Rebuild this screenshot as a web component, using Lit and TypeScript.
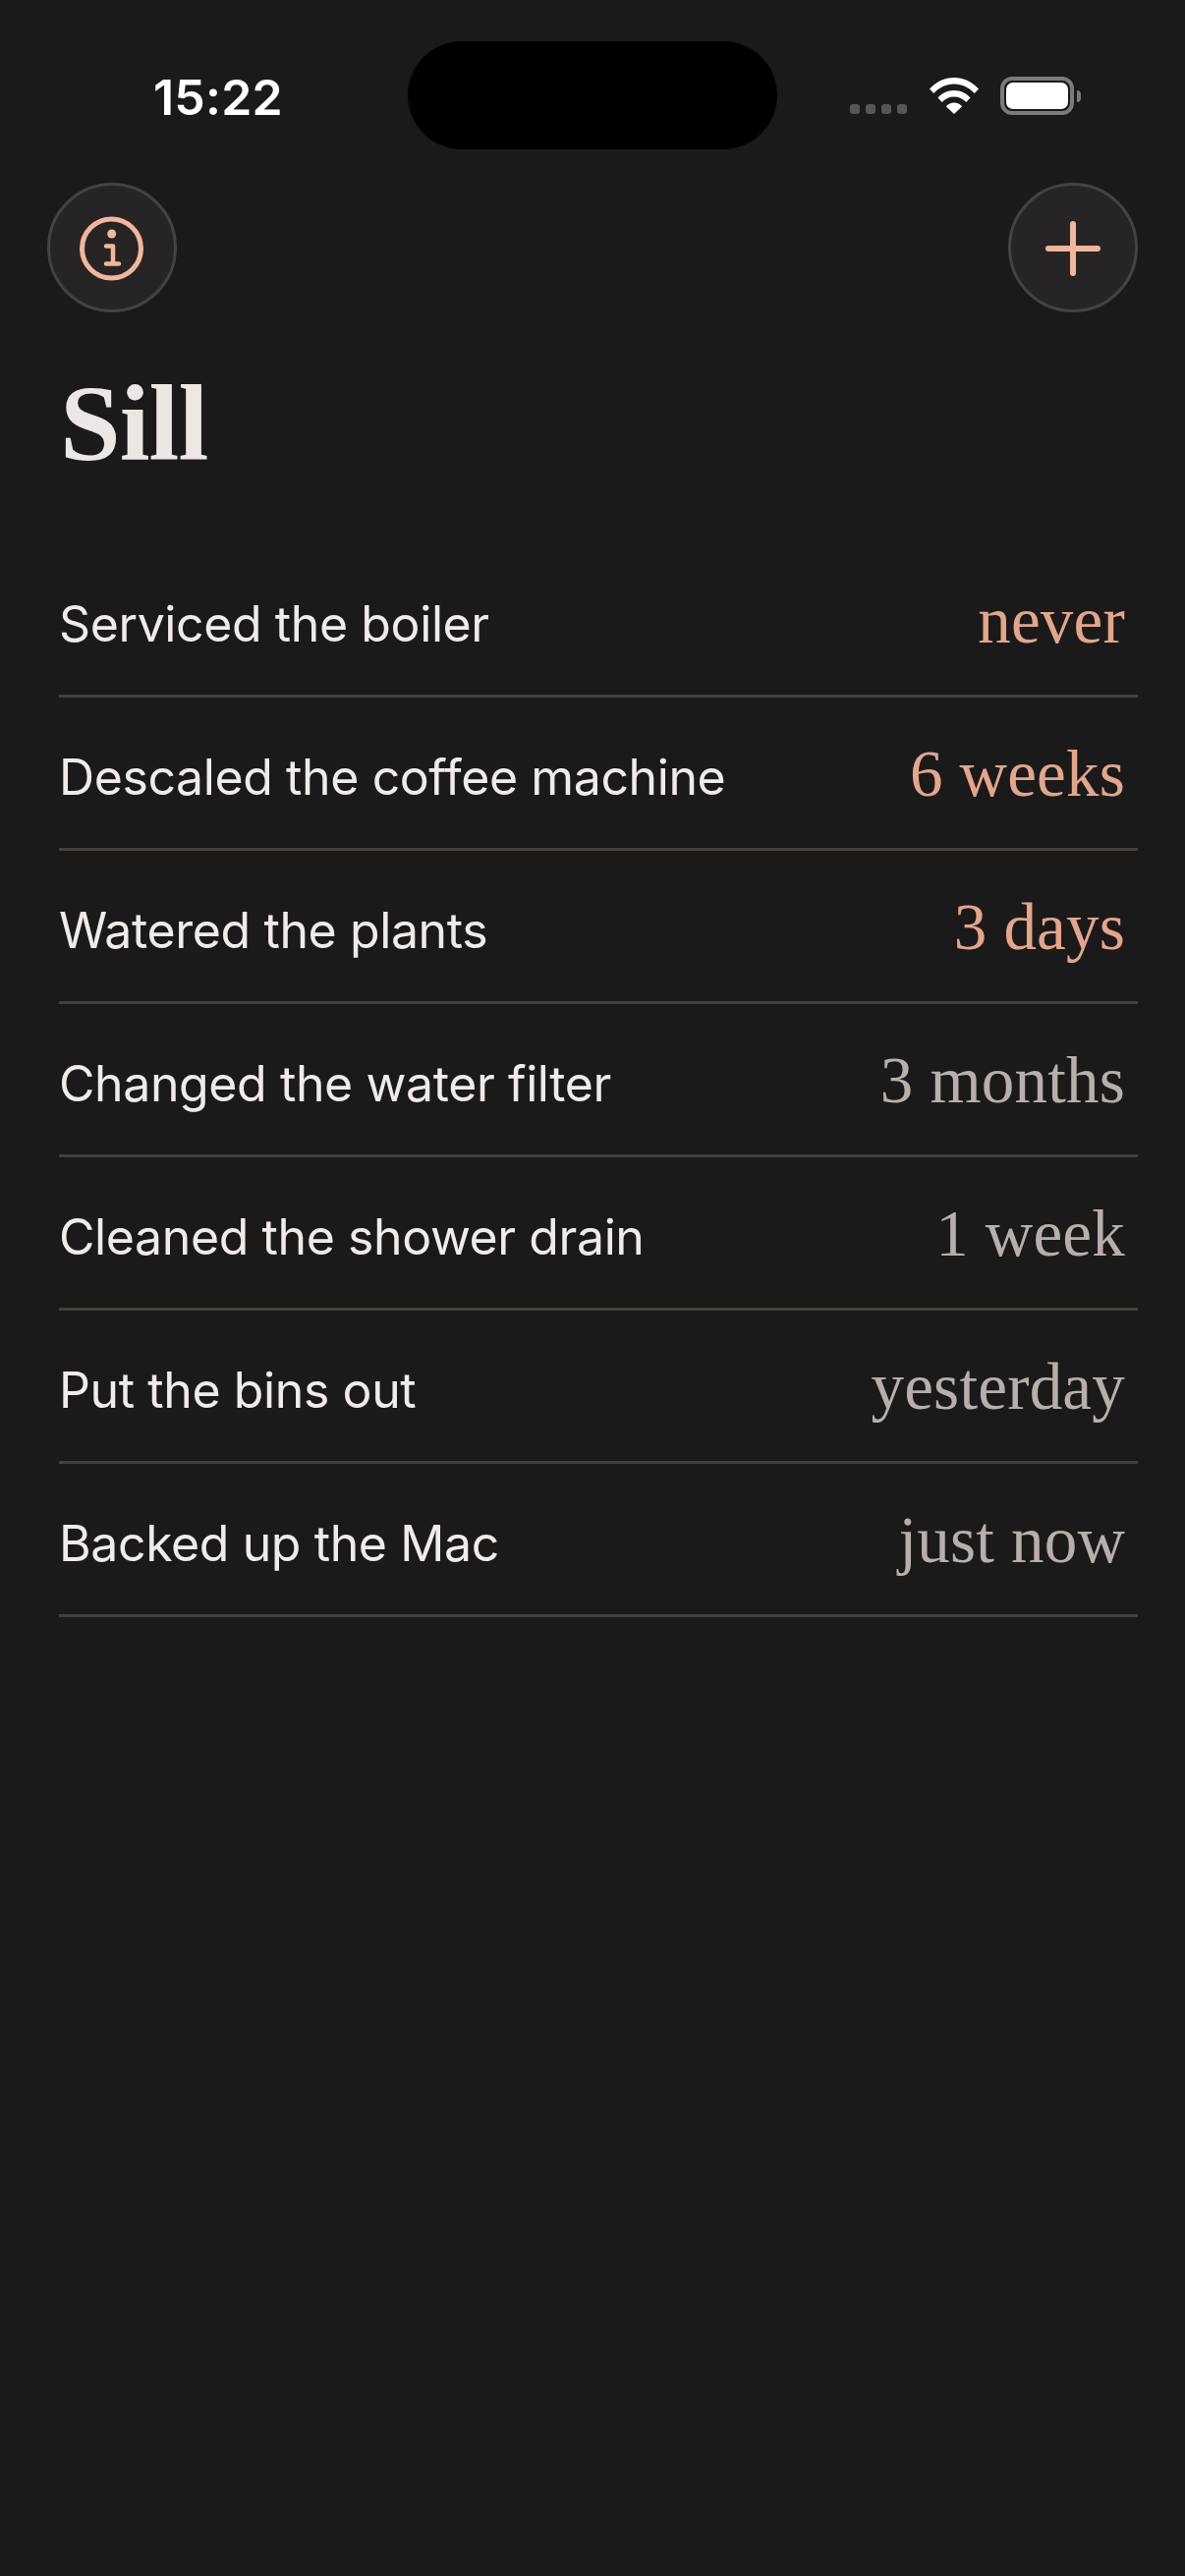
import { LitElement, html, css } from 'lit'
import { customElement } from 'lit/decorators.js'

interface Chore {
  label: string
  ago: string
  overdue: boolean
}

const CHORES: Chore[] = [
  { label: 'Serviced the boiler', ago: 'never', overdue: true },
  { label: 'Descaled the coffee machine', ago: '6 weeks', overdue: true },
  { label: 'Watered the plants', ago: '3 days', overdue: true },
  { label: 'Changed the water filter', ago: '3 months', overdue: false },
  { label: 'Cleaned the shower drain', ago: '1 week', overdue: false },
  { label: 'Put the bins out', ago: 'yesterday', overdue: false },
  { label: 'Backed up the Mac', ago: 'just now', overdue: false }
]

@customElement('app-root')
export class AppRoot extends LitElement {
  render() {
    return html`
      <div class="status">
        <span class="time">15:22</span>
        <div class="island"></div>
        <div class="indicators">
          <div class="dots"><i></i><i></i><i></i><i></i></div>
          <svg class="wifi" width="50" height="37" viewBox="0 0 50 37" fill="#fff">
            <path d="M0 11.500C6.500 4.300 15.300 0 25 0s18.500 4.300 25 11.500l-4.200 4.600C40.300 10.200 33 6.500 25 6.500S9.700 10.200 4.200 16.100z"/>
            <path d="M8.500 20.400C12.800 15.700 18.600 13 25 13s12.200 2.700 16.500 7.400l-4.200 4.600C34.100 21.500 29.800 19.500 25 19.500S15.900 21.500 12.700 25z"/>
            <path d="M16.800 29.200c2.100-2.300 5-3.700 8.200-3.700s6.100 1.400 8.200 3.700L25 37z"/>
          </svg>
          <div class="battery"><div class="cell"></div></div>
          <div class="nub"></div>
        </div>
      </div>

      <div class="toolbar">
        <button class="round" aria-label="About">
          <svg width="68" height="68" viewBox="0 0 68 68" fill="none" stroke="#f4b69a" stroke-width="5" stroke-linecap="round">
            <circle cx="33.500" cy="34" r="30"/>
            <circle cx="33.700" cy="19" r="4.500" fill="#f4b69a" stroke="none"/>
            <path d="M28 31.500H35V49" stroke-linejoin="round" stroke-width="4.500"/>
            <path d="M28 49.500H41" stroke-width="4.500"/>
          </svg>
        </button>
        <button class="round" aria-label="Add">
          <svg width="56" height="56" viewBox="0 0 56 56" fill="none" stroke="#f4b69a" stroke-width="6" stroke-linecap="round">
            <path d="M28 3V53M3 28H53"/>
          </svg>
        </button>
      </div>

      <h1>Sill</h1>

      <ul>
        ${CHORES.map(c => html`
          <li>
            <span class="label">${c.label}</span>
            <span class="ago ${c.overdue ? 'overdue' : ''}">${c.ago}</span>
          </li>
        `)}
      </ul>
    `
  }

  static styles = css`
    :host {
      display: block;
      min-height: 2622px;
      background: #1a1a1a;
      overflow: hidden;
    }

    .status {
      display: grid;
      grid-template-columns: 415px 376px 1fr;
      height: 152px;
      padding-top: 42px;
      box-sizing: border-box;
    }

    .time {
      padding: 27px 0 0 156px;
      color: #fff;
      font: 600 50px/60px Inter, sans-serif;
      letter-spacing: 0.2px;
    }

    .island {
      height: 110px;
      border-radius: 55px;
      background: #000;
    }

    .indicators {
      display: flex;
      align-items: flex-start;
      padding: 36px 0 0 74px;
    }

    .dots {
      display: flex;
      gap: 6px;
      margin: 28px 23px 0 0;
    }

    .dots i {
      width: 10px;
      height: 10px;
      border-radius: 3px;
      background: #565656;
    }

    .wifi {
      margin: 1px 22px 0 0;
    }

    .battery {
      width: 75px;
      height: 39px;
      box-sizing: border-box;
      border: 4px solid #7b7b7b;
      border-radius: 12px;
      padding: 2px;
    }

    .cell {
      height: 100%;
      border-radius: 7px;
      background: #fff;
    }

    .nub {
      width: 4px;
      height: 12px;
      margin: 14px 0 0 3px;
      border-radius: 0 6px 6px 0;
      background: #7b7b7b;
    }

    .toolbar {
      display: flex;
      justify-content: space-between;
      padding: 34px 48px 0;
    }

    .round {
      width: 132px;
      height: 132px;
      padding: 0;
      display: flex;
      align-items: center;
      justify-content: center;
      box-sizing: border-box;
      border: 3px solid #444243;
      border-radius: 50%;
      background: #262425;
    }

    .round svg {
      margin-top: 2px;
    }

    h1 {
      margin: 63px 0 0 61px;
      color: #ece7e4;
      font: 700 111px/100px "Liberation Serif", serif;
      letter-spacing: -1px;
    }

    ul {
      list-style: none;
      margin: 73px 48px 0 60px;
      padding: 0;
    }

    li {
      display: flex;
      align-items: flex-start;
      justify-content: space-between;
      height: 156px;
      box-sizing: border-box;
      padding-right: 13px;
      border-bottom: 3px solid #45403c;
    }

    .label {
      margin-top: 51px;
      color: #f0ebe8;
      font: 400 50px/60px Inter, sans-serif;
      letter-spacing: -0.4px;
    }

    .ago {
      margin-top: 42px;
      color: #b8afaa;
      font: 400 67px/70px "Liberation Serif", serif;
      letter-spacing: 0.2px;
    }

    .ago.overdue {
      color: #e3a68a;
    }
  `
}
